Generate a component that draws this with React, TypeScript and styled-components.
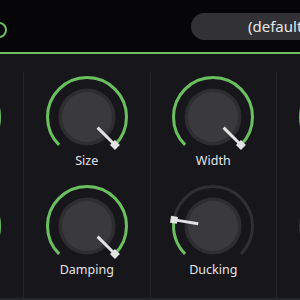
import React from "react";
import styled, { createGlobalStyle } from "styled-components";

const Global = createGlobalStyle`
  html, body { margin: 0; padding: 0; background: #16161b; overflow: hidden; }
  body { width: 300px; height: 300px; font-family: "Noto Sans", "DejaVu Sans", sans-serif; }
`;

const Frame = styled.div`
  width: 300px;
  height: 300px;
  overflow: hidden;
  display: flex;
  flex-direction: column;
  background: #16161b;
`;

const Header = styled.header`
  flex: 0 0 auto;
  height: 52px;
  background: #060609;
  border-bottom: 2px solid #6abf5e;
  display: flex;
  align-items: center;
  overflow: hidden;
`;

const PowerIcon = styled.svg`
  flex: 0 0 auto;
  width: 16px;
  height: 16px;
  margin-left: -9px;
  margin-top: 7px;
`;

const PresetPill = styled.div`
  flex: 0 0 auto;
  width: 180px;
  height: 27px;
  margin-left: 184px;
  margin-top: 1px;
  border-radius: 13.5px;
  background: #323236;
  color: #e6e6e6;
  font-size: 15px;
  line-height: 27px;
  padding-left: 57px;
  box-sizing: border-box;
  white-space: nowrap;
`;

const Body = styled.main`
  flex: 1 1 auto;
  display: flex;
  margin-left: -103.5px;
  padding-top: 18px;
  border-bottom: 2px solid #22262b;
`;

const Column = styled.section`
  flex: 0 0 auto;
  width: 126.5px;
  box-sizing: border-box;
  border-left: 1px solid #25252a;
  display: flex;
  flex-direction: column;
  align-items: center;
  gap: 13px;
`;

const Cell = styled.div`
  display: flex;
  flex-direction: column;
  align-items: center;
`;

const KnobSvg = styled.svg`
  display: block;
  width: 90px;
  height: 80px;
`;

const Label = styled.div`
  height: 15px;
  padding-top: 1px;
  line-height: 15px;
  font-size: 12.5px;
  color: #e4e4e4;
  white-space: nowrap;
`;

const R = 39.5;
const CX = 45;
const CY = 45;

function polar(angleDeg: number, r: number) {
  const a = (angleDeg * Math.PI) / 180;
  return { x: CX + r * Math.sin(a), y: CY - r * Math.cos(a) };
}

function arcPath(from: number, to: number) {
  const s = polar(from, R);
  const e = polar(to, R);
  const large = to - from > 180 ? 1 : 0;
  return `M ${s.x} ${s.y} A ${R} ${R} 0 ${large} 1 ${e.x} ${e.y}`;
}

const Knob: React.FC<{ label: string; value: number }> = ({ label, value }) => {
  const angle = -135 + 270 * value;
  return (
    <Cell>
      <KnobSvg viewBox="0 0 90 80">
        <path d={arcPath(-135, 135)} fill="none" stroke="#303033" strokeWidth={3} />
        {value > 0.001 && (
          <path d={arcPath(-135, angle)} fill="none" stroke="#6abf5e" strokeWidth={3} />
        )}
        <circle cx={CX} cy={CY} r={28.5} fill="#2e2e31" />
        <circle cx={CX} cy={CY} r={25} fill="#3a3a3c" />
        <g transform={`rotate(${angle} ${CX} ${CY})`}>
          <line x1={CX} y1={CY - 15} x2={CX} y2={CY - R + 2} stroke="#e2e2e2" strokeWidth={3} />
          <rect x={CX - 3.5} y={CY - R - 3.5} width={7} height={7} fill="#e2e2e2" />
        </g>
      </KnobSvg>
      <Label>{label}</Label>
    </Cell>
  );
};

const columns: { label: string; value: number }[][] = [
  [
    { label: "Mix", value: 1 },
    { label: "Mod", value: 1 },
  ],
  [
    { label: "Size", value: 1 },
    { label: "Damping", value: 1 },
  ],
  [
    { label: "Width", value: 1 },
    { label: "Ducking", value: 0.2 },
  ],
  [
    { label: "Tail", value: 0.5 },
    { label: "Gate", value: 0 },
  ],
];

export default function App() {
  return (
    <Frame>
      <Global />
      <Header>
        <PowerIcon viewBox="0 0 16 16">
          <circle cx={8} cy={8} r={7} fill="none" stroke="#6abf5e" strokeWidth={2} />
        </PowerIcon>
        <PresetPill>(default)</PresetPill>
      </Header>
      <Body>
        {columns.map((col, i) => (
          <Column key={i}>
            {col.map((k) => (
              <Knob key={k.label} label={k.label} value={k.value} />
            ))}
          </Column>
        ))}
      </Body>
    </Frame>
  );
}
